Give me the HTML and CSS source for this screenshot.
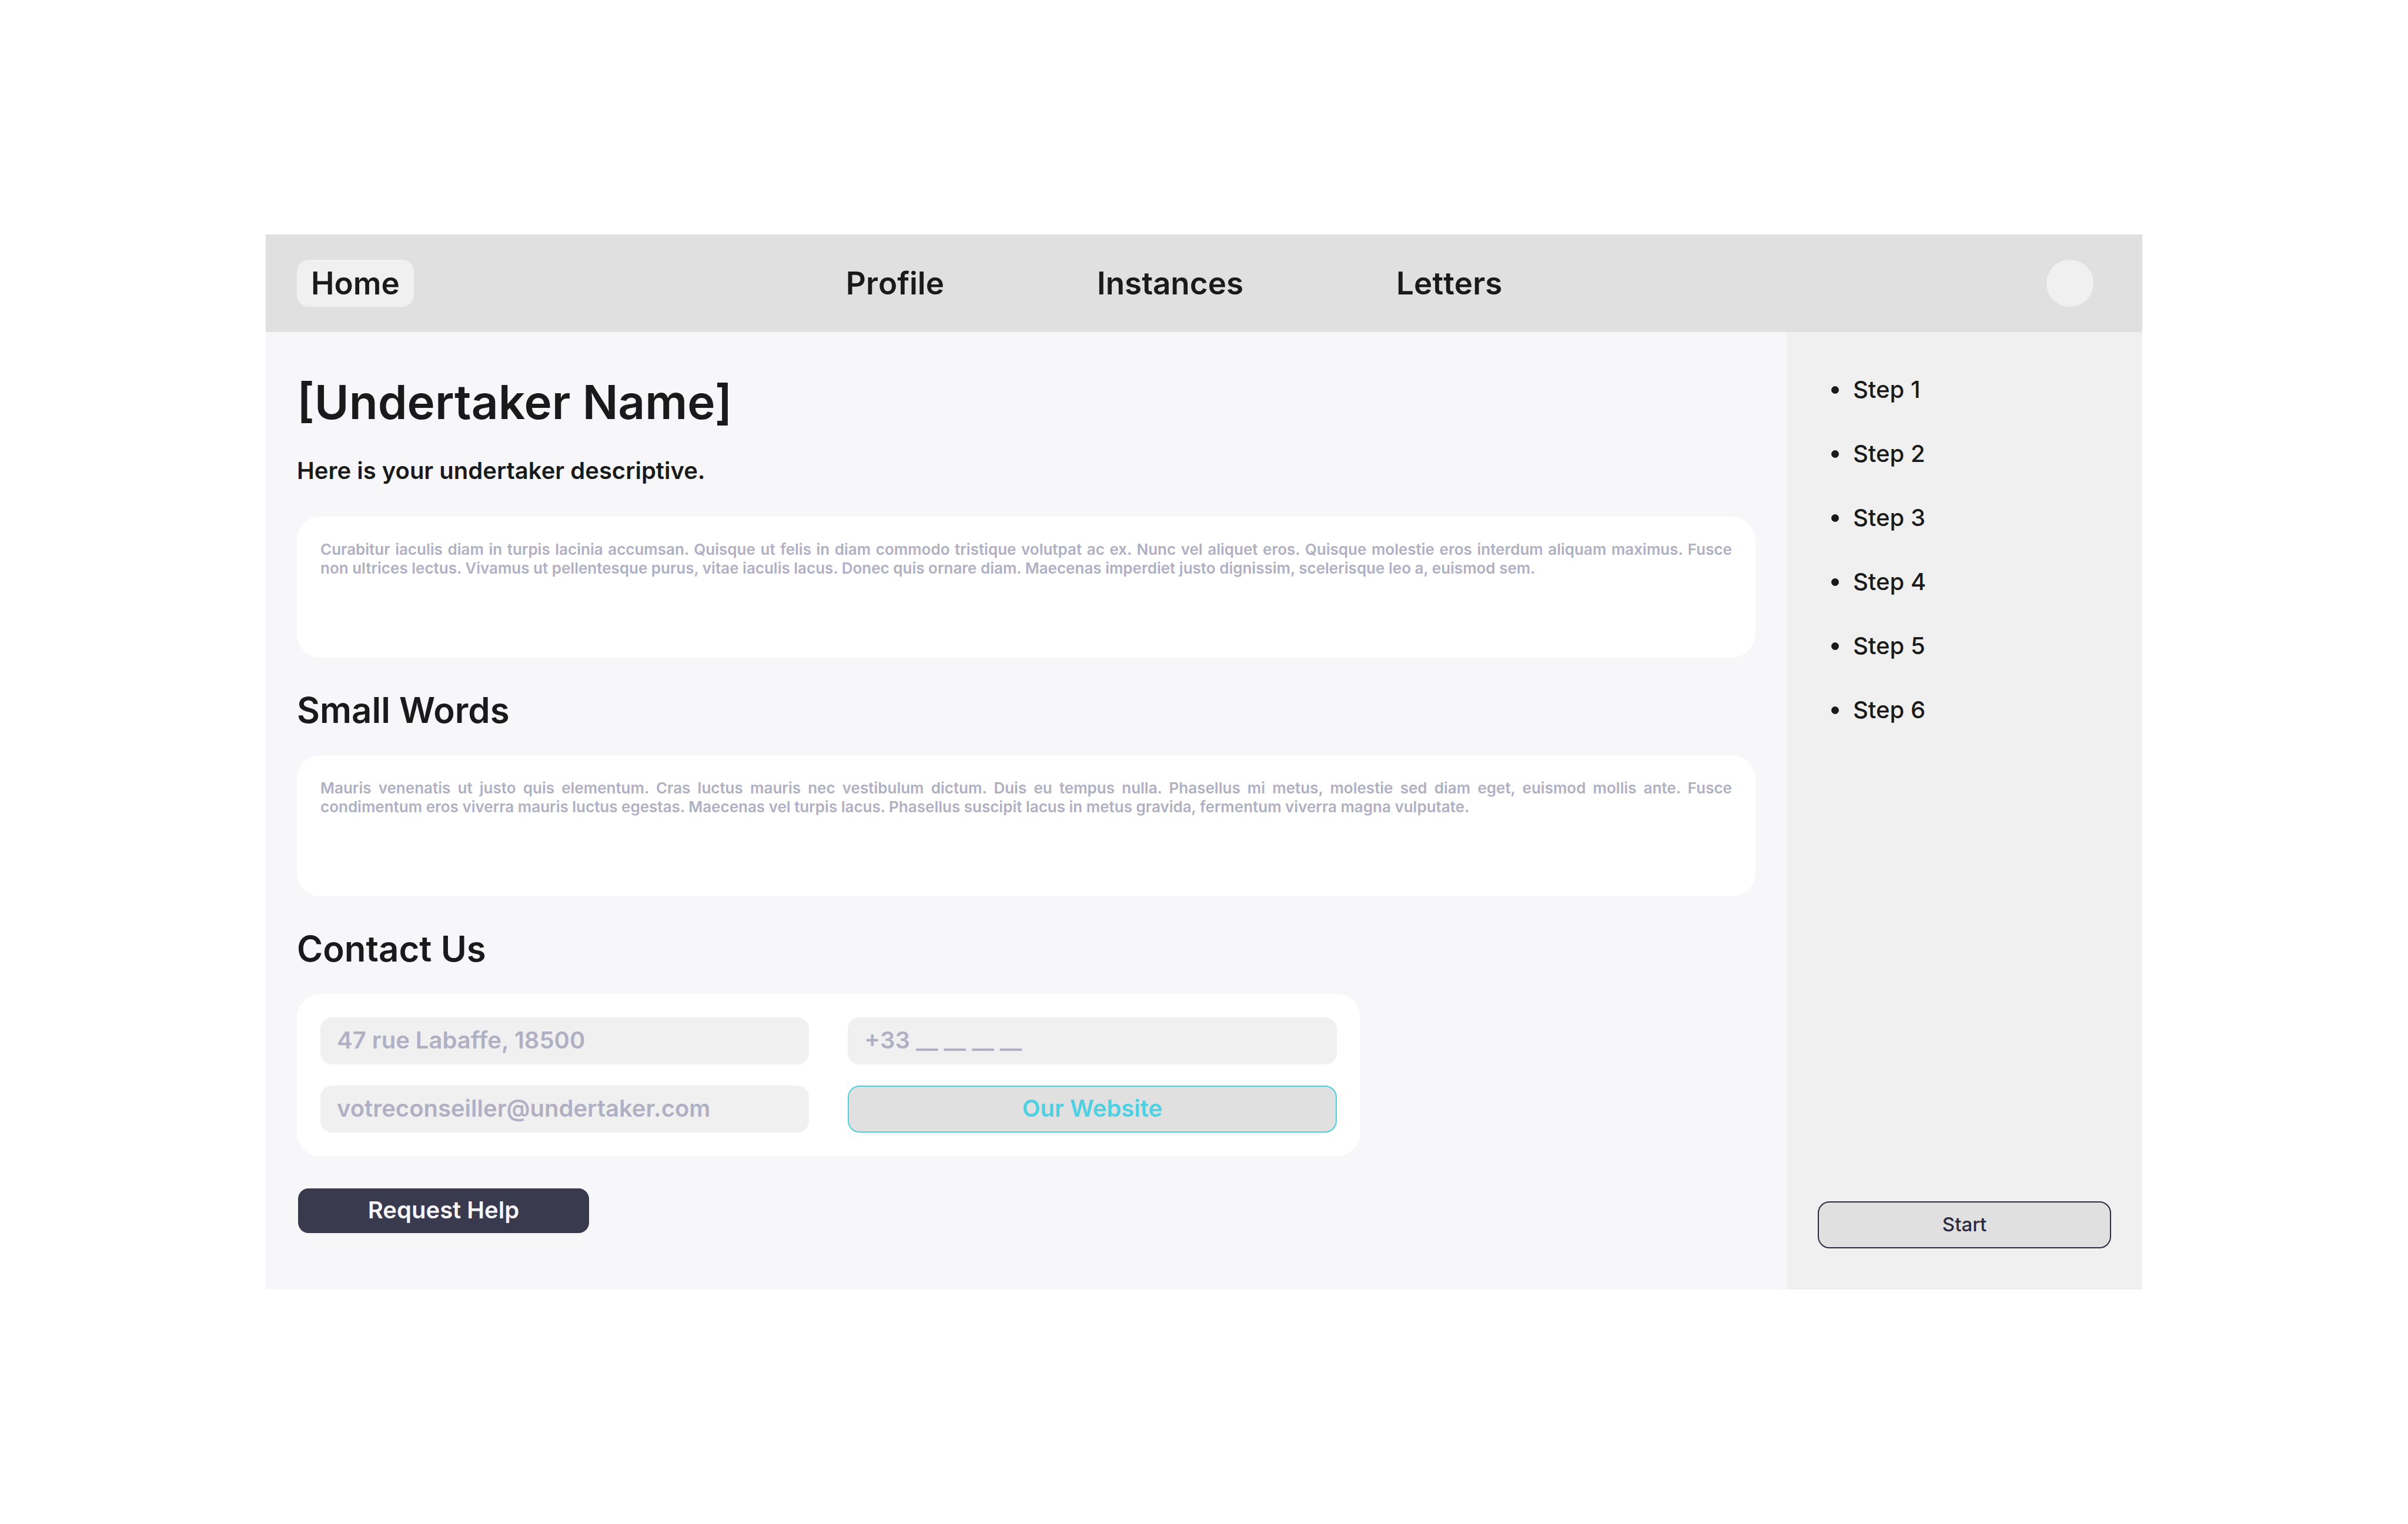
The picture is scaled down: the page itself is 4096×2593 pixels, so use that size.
FILE: index.html
```html
<!DOCTYPE html>
<html lang="en">
<head>
<meta charset="utf-8">
<title>Undertaker</title>
<link rel="stylesheet" href="styles.css">
</head>
<body class="page">
<div class="app">
  <header class="header">
    <a class="home" href="#home">Home</a>
    <nav class="nav">
      <a href="#profile">Profile</a>
      <a href="#instances">Instances</a>
      <a href="#letters">Letters</a>
    </nav>
    <button class="avatar" type="button" aria-label="Account"></button>
  </header>
  <div class="body">
    <main class="main">
      <h1 class="title">[Undertaker Name]</h1>
      <p class="lead">Here is your undertaker descriptive.</p>
      <p class="card note">Curabitur iaculis diam in turpis lacinia accumsan. Quisque ut felis in diam commodo tristique volutpat ac ex. Nunc vel aliquet eros. Quisque molestie eros interdum aliquam maximus. Fusce non&nbsp;ultrices lectus. Vivamus ut pellentesque purus, vitae iaculis lacus. Donec quis ornare diam. Maecenas imperdiet justo dignissim, scelerisque leo a, euismod sem.</p>
      <h2 class="heading">Small Words</h2>
      <p class="card note">Mauris venenatis ut justo quis elementum. Cras luctus mauris nec vestibulum dictum. Duis eu tempus nulla. Phasellus mi metus, molestie sed diam eget, euismod mollis ante. Fusce condimentum eros viverra mauris luctus egestas. Maecenas vel turpis lacus. Phasellus suscipit lacus in metus gravida, fermentum viverra magna vulputate.</p>
      <h2 class="heading">Contact Us</h2>
      <form class="card contact">
        <input class="field" type="text" aria-label="Address" placeholder="47 rue Labaffe, 18500">
        <input class="field" type="tel" aria-label="Phone" placeholder="+33 __ __ __ __">
        <input class="field" type="email" aria-label="Email" placeholder="votreconseiller@undertaker.com">
        <a class="website" href="#website">Our Website</a>
      </form>
      <button class="help" type="button">Request Help</button>
    </main>
    <aside class="sidebar">
      <ul class="steps">
        <li>Step 1</li>
        <li>Step 2</li>
        <li>Step 3</li>
        <li>Step 4</li>
        <li>Step 5</li>
        <li>Step 6</li>
      </ul>
      <button class="start" type="button">Start</button>
    </aside>
  </div>
</div>
</body>
</html>
```
FILE: styles.css
```css
* {
  box-sizing: border-box;
  margin: 0;
}

.page {
  display: flex;
  min-height: 100vh;
  padding: 399px 452px;
  background: #fff;
  color: #1a1a1a;
  font-family: Inter, "Liberation Sans", sans-serif;
  font-weight: 600;
}

.page a {
  color: inherit;
  text-decoration: none;
}

.page button,
.page input {
  font-family: inherit;
}

.app {
  display: flex;
  flex: 1;
  flex-direction: column;
  background: #f7f7fa;
}

.header {
  display: grid;
  grid-template-columns: 13fr auto 14fr;
  align-items: center;
  padding: 43px 83px 43px 53px;
  background: #e0e0e0;
  font-size: 53px;
  line-height: 80px;
}

.home {
  justify-self: start;
  padding: 0 24px;
  border-radius: 20px;
  background: #f0f0f0;
}

.nav {
  display: flex;
  gap: 260px;
  font-kerning: none;
}

.avatar {
  justify-self: end;
  width: 80px;
  height: 80px;
  border: 0;
  border-radius: 50%;
  background: #f0f0f0;
}

.body {
  display: flex;
  flex: 1;
}

.main {
  flex: 1;
  padding: 70px 53px;
}

.title {
  font-size: 80px;
  font-weight: 600;
  line-height: 97px;
}

.lead {
  margin: 45px 0 54px;
  font-size: 40px;
  line-height: 48px;
}

.card {
  padding: 40px;
  border-radius: 40px;
  background: #fff;
}

.note {
  min-height: 240px;
  color: #b0afc3;
  font-size: 26px;
  line-height: 32px;
  text-align: justify;
}

.heading {
  margin: 53px 0 40px;
  font-size: 60px;
  font-weight: 600;
  line-height: 73px;
}

.contact {
  display: grid;
  grid-template-columns: 1fr 1fr;
  gap: 36px 66px;
  width: 72.9%;
}

.field,
.website {
  min-width: 0;
  height: 80px;
  border-radius: 20px;
  font-size: 40px;
  font-weight: 600;
}

.field {
  padding: 0 28px 3px;
  border: 0;
  background: #f0f0f0;
}

.field::placeholder {
  color: #b0afc3;
  opacity: 1;
}

.page .website {
  border: 2px solid #4dd0e1;
  background: #e0e0e0;
  color: #4dd0e1;
  line-height: 74px;
  text-align: center;
}

.help,
.start {
  height: 80px;
  padding: 0 28px 3px;
  border-radius: 20px;
}

.help {
  width: 499px;
  margin-top: 53px;
  border: 2px solid #f7f7fa;
  background: #3a3a4f;
  color: #f7f7fa;
  font-size: 40px;
  font-weight: 600;
}

.sidebar {
  display: flex;
  flex-direction: column;
  justify-content: space-between;
  width: 605px;
  padding: 74px 53px 70px;
  background: #f0f0f0;
}

.steps {
  display: grid;
  gap: 61px;
  padding-left: 56px;
  font-size: 40px;
  font-weight: 500;
  line-height: 48px;
}

.steps li {
  padding-left: 4px;
}

.start {
  border: 2px solid #2c2a3e;
  background: #e0e0e0;
  color: #2c2a3e;
  font-size: 33px;
  font-weight: 500;
  font-kerning: none;
}
```
